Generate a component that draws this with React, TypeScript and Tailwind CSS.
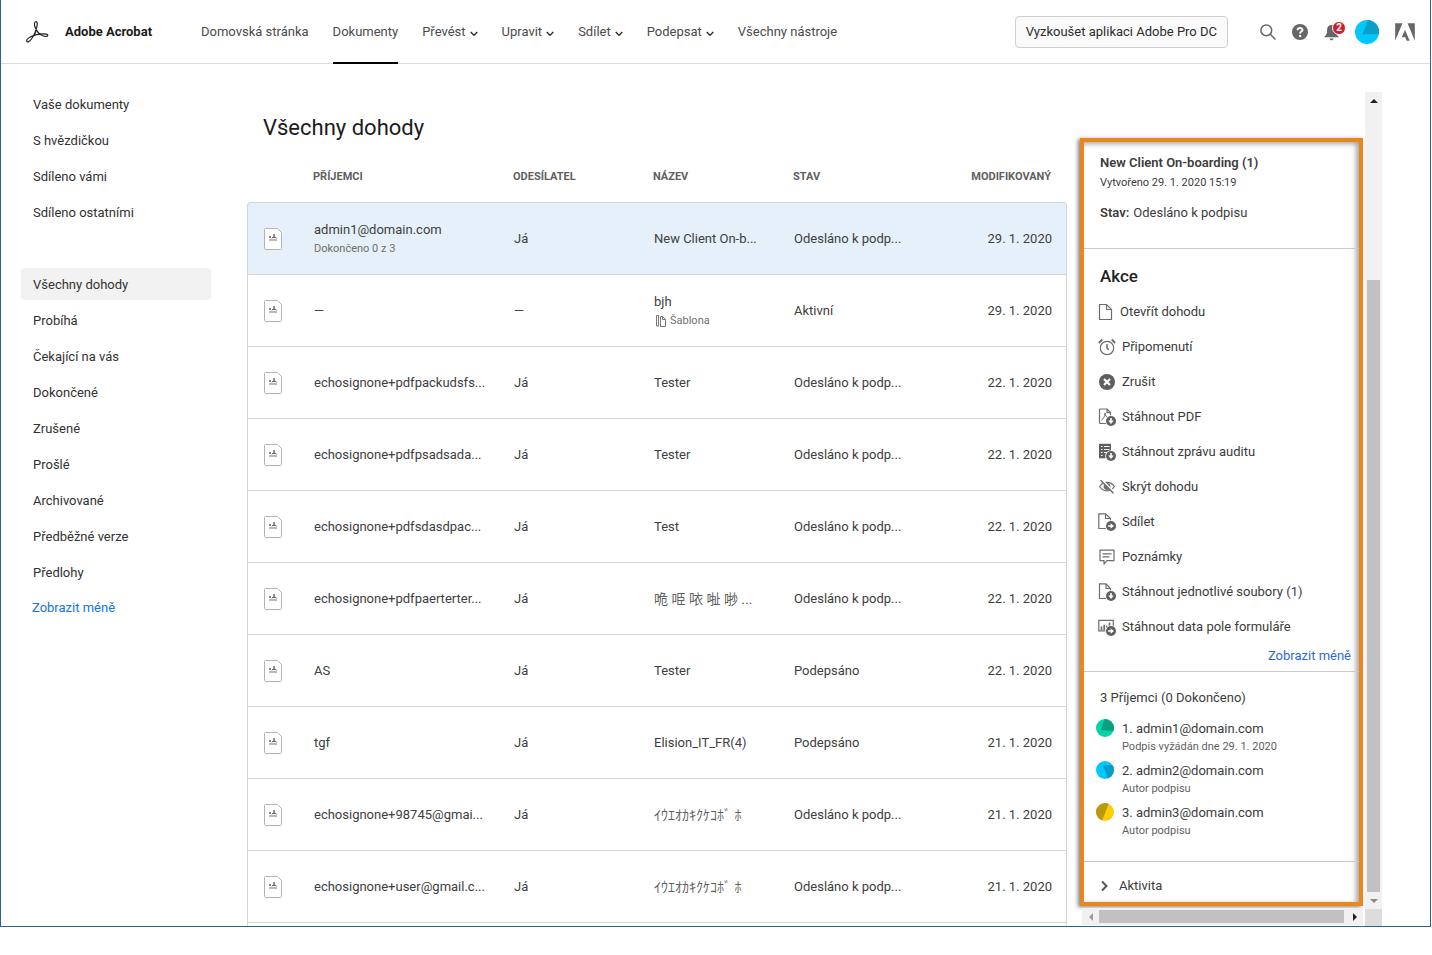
import { ReactNode } from "react";

type Agreement = {
  recipient: string;
  progress?: string;
  sender: string;
  title: string;
  eastAsian?: boolean;
  template?: boolean;
  status: string;
  modified: string;
};

type Recipient = {
  email: string;
  note: string;
  base: string;
  shade: string;
  wedge: string;
};

const navItems = [
  { label: "Domovská stránka" },
  { label: "Dokumenty", active: true },
  { label: "Převést", menu: true },
  { label: "Upravit", menu: true },
  { label: "Sdílet", menu: true },
  { label: "Podepsat", menu: true },
  { label: "Všechny nástroje" },
];

const documentLinks = [
  "Vaše dokumenty",
  "S hvězdičkou",
  "Sdíleno vámi",
  "Sdíleno ostatními",
];

const agreementLinks = [
  "Všechny dohody",
  "Probíhá",
  "Čekající na vás",
  "Dokončené",
  "Zrušené",
  "Prošlé",
  "Archivované",
  "Předběžné verze",
  "Předlohy",
];

const agreements: Agreement[] = [
  {
    recipient: "admin1@domain.com",
    progress: "Dokončeno 0 z 3",
    sender: "Já",
    title: "New Client On-b...",
    status: "Odesláno k podp...",
    modified: "29. 1. 2020",
  },
  {
    recipient: "—",
    sender: "—",
    title: "bjh",
    template: true,
    status: "Aktivní",
    modified: "29. 1. 2020",
  },
  {
    recipient: "echosignone+pdfpackudsfs...",
    sender: "Já",
    title: "Tester",
    status: "Odesláno k podp...",
    modified: "22. 1. 2020",
  },
  {
    recipient: "echosignone+pdfpsadsada...",
    sender: "Já",
    title: "Tester",
    status: "Odesláno k podp...",
    modified: "22. 1. 2020",
  },
  {
    recipient: "echosignone+pdfsdasdpac...",
    sender: "Já",
    title: "Test",
    status: "Odesláno k podp...",
    modified: "22. 1. 2020",
  },
  {
    recipient: "echosignone+pdfpaerterter...",
    sender: "Já",
    title: "𠱓 𠱸 𠲖 𠳏 𠳕 ...",
    eastAsian: true,
    status: "Odesláno k podp...",
    modified: "22. 1. 2020",
  },
  {
    recipient: "AS",
    sender: "Já",
    title: "Tester",
    status: "Podepsáno",
    modified: "22. 1. 2020",
  },
  {
    recipient: "tgf",
    sender: "Já",
    title: "Elision_IT_FR(4)",
    status: "Podepsáno",
    modified: "21. 1. 2020",
  },
  {
    recipient: "echosignone+98745@gmai...",
    sender: "Já",
    title: "ｲｳｴｵｶｷｸｹｺﾎﾞ ﾎ",
    eastAsian: true,
    status: "Odesláno k podp...",
    modified: "21. 1. 2020",
  },
  {
    recipient: "echosignone+user@gmail.c...",
    sender: "Já",
    title: "ｲｳｴｵｶｷｸｹｺﾎﾞ ﾎ",
    eastAsian: true,
    status: "Odesláno k podp...",
    modified: "21. 1. 2020",
  },
];

const recipients: Recipient[] = [
  {
    email: "1. admin1@domain.com",
    note: "Podpis vyžádán dne 29. 1. 2020",
    base: "#00d3a7",
    shade: "#0b9e80",
    wedge: "M5 11 9-1h10v13z",
  },
  {
    email: "2. admin2@domain.com",
    note: "Autor podpisu",
    base: "#00c8ff",
    shade: "#0a9cc6",
    wedge: "M7 4h11v14h-6z",
  },
  {
    email: "3. admin3@domain.com",
    note: "Autor podpisu",
    base: "#ffce00",
    shade: "#b89a10",
    wedge: "M13 0H0v18h6z",
  },
];

const Chevron = () => (
  <svg
    viewBox="0 0 8 6"
    className="mt-1 h-1.5 w-2 shrink-0"
    fill="none"
    stroke="#222"
    strokeWidth="1.3"
  >
    <path d="M.8 1 4 4.400 7.200 1" />
  </svg>
);

const AcrobatLogo = () => (
  <svg viewBox="0 0 24 24" className="h-6 w-6" fill="none" stroke="#222" strokeWidth="1.2">
    <path d="M11 1.600c-1.800 0-2 3.200-.7 6.200 1.400 3.500 4.300 6.700 7.500 8 2.200.9 4.700.9 5-.2.300-1.300-2.300-1.900-5.500-1.700-3.400.2-7.600 1-10.600 2.400-3 1.400-5.400 3.700-4.900 5 .4 1.200 2.700.5 4.700-2.300 2.200-3.100 4.400-7.800 5.200-11.300.8-3.300.9-6.100-.7-6.100z" />
    <path d="M11.800 9.500c-.8 2.600-1.700 4.800-3 7" strokeWidth=".8" />
  </svg>
);

const Badge = ({ arrow }: { arrow: "down" | "right" }) => (
  <g stroke="none">
    <circle cx="13" cy="13" r="5.800" fill="#fff" />
    <circle cx="13" cy="13" r="5" fill="#5f5f5f" />
    {arrow === "down" ? (
      <path d="M12.200 10h1.600v2.600h2L13 16l-2.800-3.400h2z" fill="#fff" />
    ) : (
      <path d="M10 12.200h2.600v-2L16 13l-3.400 2.800v-2H10z" fill="#fff" />
    )}
  </g>
);

const ActionIcon = ({ children }: { children: ReactNode }) => (
  <svg
    viewBox="0 0 18 18"
    className="h-[18px] w-[18px] shrink-0"
    fill="none"
    stroke="#6e6e6e"
    strokeWidth="1.2"
  >
    {children}
  </svg>
);

const actions: { label: string; icon: ReactNode }[] = [
  {
    label: "Připomenutí",
    icon: (
      <>
        <circle cx="9" cy="10" r="6.700" />
        <path d="M9 6v4.300l2 1.300" strokeWidth="1.500" />
        <path d="M.8 5 4.300 1.500M17.200 5l-3.500-3.500" strokeWidth="1.800" />
      </>
    ),
  },
  {
    label: "Zrušit",
    icon: (
      <>
        <circle cx="9" cy="9" r="8" fill="#5f5f5f" stroke="none" />
        <path d="m6 6 6 6m0-6-6 6" stroke="#fff" strokeWidth="2.200" />
      </>
    ),
  },
  {
    label: "Stáhnout PDF",
    icon: (
      <>
        <path d="M8 15.500H2.500a1 1 0 0 1-1-1V2a1 1 0 0 1 1-1h6.600L12.500 4.500V8M9 1v3.600h3.500" />
        <path d="M3.500 12c2-1 3.500-4 3.500-7 0 2.500 1.500 4.500 4 5" strokeWidth="1" />
        <Badge arrow="down" />
      </>
    ),
  },
  {
    label: "Stáhnout zprávu auditu",
    icon: (
      <>
        <path d="M1 .8h12v14.500H1z" fill="#5f5f5f" stroke="none" />
        <path
          d="M3 3.500h1.500M6 3.500h5.500M3 6.500h1.500M6 6.500h5.500M3 9.500h1.500M6 9.500h3M3 12.500h1.500"
          stroke="#fff"
        />
        <Badge arrow="down" />
      </>
    ),
  },
  {
    label: "Skrýt dohodu",
    icon: (
      <>
        <path d="M1.700 8.500C3.300 5.800 6 4.300 9 4.300s5.700 1.500 7.300 4.200c-1.600 2.700-4.300 4.300-7.300 4.300s-5.700-1.600-7.300-4.300z" />
        <circle cx="9" cy="8.500" r="2.800" fill="#6e6e6e" />
        <path d="m3.600 1.600 12.300 12.300" stroke="#fff" strokeWidth="1.500" />
        <path d="m2.500 2.200 13 13" strokeWidth="1.500" />
      </>
    ),
  },
  {
    label: "Sdílet",
    icon: (
      <>
        <path d="M8 15.500H.8V.8h6.700L12.500 5.500V8M7.500.8v4.700h5" />
        <Badge arrow="right" />
      </>
    ),
  },
  {
    label: "Poznámky",
    icon: (
      <>
        <path d="M2 2.200h14v10.400H9l-3 3.400v-3.400H2z" strokeLinejoin="round" />
        <path d="M4.500 5.800h9M4.500 8.800h7" />
      </>
    ),
  },
  {
    label: "Stáhnout jednotlivé soubory (1)",
    icon: (
      <>
        <path d="M8 15.500H1.500V.8h6.500L12.500 5.500V8M8 .8v4.700h4.500" />
        <Badge arrow="down" />
      </>
    ),
  },
  {
    label: "Stáhnout data pole formuláře",
    icon: (
      <>
        <path d="M.8 2.300h14.500v10.500H.8z" />
        <path d="M3.500 12V8.500M6.200 12V6.800M8.800 12V7.800M11.500 10V4.500" strokeWidth="1.700" />
        <Badge arrow="right" />
      </>
    ),
  },
];

const AgreementIcon = () => (
  <svg viewBox="0 0 18 22" className="h-[22px] w-[18px]" fill="#fff" stroke="#b4b4b4">
    <path d="M.5 1.500a1 1 0 0 1 1-1h12l4 4v16a1 1 0 0 1-1 1h-15a1 1 0 0 1-1-1z" />
    <path d="M5 12h8" stroke="#777" />
    <path
      d="m5.200 8 1.800 1.800m0-1.800-1.800 1.800M7.700 10.500c1.500-1 2.700-2.700 2.300-4.500M10 6c0 2 1 3.800 2.700 4.300M8.300 9.500h3.700"
      stroke="#666"
      fill="none"
    />
  </svg>
);

const TemplateIcon = () => (
  <svg viewBox="0 0 10 12" className="h-3 w-2.5" fill="none" stroke="#777">
    <path d="M.5.500v10.500h2V.5zM4.500 1.500v10h5V4.500L6.500 1.500zM6.500 1.500v3h3" />
  </svg>
);

const Header = () => (
  <header className="flex h-16 items-center border-b border-[#dcdcdc] pl-6 pr-[15px]">
    <a href="#" className="flex w-[176px] shrink-0 items-center gap-4">
      <AcrobatLogo />
      <span className="text-[13px] font-bold text-[#1b1b1b]">Adobe Acrobat</span>
    </a>
    <nav className="flex h-16 flex-1 gap-6">
      {navItems.map((item) => (
        <a
          key={item.label}
          href="#"
          className={`flex items-center gap-1 whitespace-nowrap border-b-2 pt-[3px] text-[13px] text-[#4b4b4b] ${
            item.active ? "border-b-black" : "border-b-transparent"
          }`}
        >
          {item.label}
          {item.menu && <Chevron />}
        </a>
      ))}
    </nav>
    <button className="h-8 whitespace-nowrap rounded border border-[#d0d0d0] bg-[#fafafa] px-2.5 text-[13px] text-[#2c2c2c]">
      Vyzkoušet aplikaci Adobe Pro DC
    </button>
    <div className="ml-8 flex items-center gap-4">
      <button aria-label="Hledat">
        <svg viewBox="0 0 16 16" className="h-4 w-4" fill="none" stroke="#666" strokeWidth="1.500">
          <circle cx="6.300" cy="6.300" r="5.400" />
          <path d="m10.300 10.300 5.200 5.200" />
        </svg>
      </button>
      <button aria-label="Nápověda">
        <svg viewBox="0 0 16 16" className="h-4 w-4" fill="none">
          <circle cx="8" cy="8" r="8" fill="#666" />
          <path
            d="M5.600 6.200c0-3 4.900-2.900 4.900-.3 0 1.700-2.400 1.700-2.400 3.600"
            stroke="#fff"
            strokeWidth="1.900"
          />
          <circle cx="8.100" cy="12" r="1.200" fill="#fff" />
        </svg>
      </button>
      <button aria-label="Oznámení" className="relative">
        <svg viewBox="0 0 16 18" className="h-[18px] w-4" fill="#666">
          <path d="M7.500 2c-3 0-4.400 2.300-4.400 5.200 0 3.800-1 4.800-2.600 6.300v.8h14v-.8C13 12 12 11 12 7.200 12 4.300 10.500 2 7.500 2zM5.600 15.500h3.800c0 1-.7 1.800-1.900 1.800s-1.900-.8-1.900-1.800z" />
        </svg>
        <span className="absolute -right-1.5 -top-0.5 flex h-3.5 w-3.5 items-center justify-center rounded-full border border-white bg-[#cf1b2b] text-[10px] font-bold text-white">
          2
        </span>
      </button>
      <button aria-label="Profil" className="-ml-px">
        <svg viewBox="0 0 24 24" className="h-6 w-6">
          <circle cx="12" cy="12" r="12" fill="#00c8ff" />
          <path d="M7.500 14.200 13 0a12 12 0 0 1 11 14.200z" fill="#0a9fc8" />
        </svg>
      </button>
      <a href="#" aria-label="Adobe">
        <svg viewBox="0 1 24 22" className="h-[18px] w-5" fill="#666">
          <path d="M13.966 22.624l-1.690-4.281H8.122l3.892-9.144 5.662 13.425zM8.884 1.376H0v21.248zm15.116 0h-8.884L24 22.624Z" />
        </svg>
      </a>
    </div>
  </header>
);

const Sidebar = () => (
  <aside className="w-[190px] shrink-0 pt-6 text-[13px] text-[#323232]">
    <ul className="flex flex-col gap-1">
      {documentLinks.map((label) => (
        <li key={label}>
          <a href="#" className="flex h-8 items-center px-3 pt-0.5">
            {label}
          </a>
        </li>
      ))}
    </ul>
    <ul className="mt-10 flex flex-col gap-1">
      {agreementLinks.map((label, index) => (
        <li key={label}>
          <a
            href="#"
            className={`flex h-8 items-center rounded px-3 pt-0.5 ${
              index === 0 ? "bg-[#f2f2f2]" : ""
            }`}
          >
            {label}
          </a>
        </li>
      ))}
      <li>
        <button className="flex h-8 items-center px-[11px] text-[#1473e6]">
          Zobrazit méně
        </button>
      </li>
    </ul>
  </aside>
);

const AgreementTable = () => (
  <main className="ml-9 min-w-0 flex-1">
    <h1 className="mt-12 px-4 text-[22px] leading-8 text-[#1b1b1b]">Všechny dohody</h1>
    <table className="mt-2 w-full table-fixed border-separate border-spacing-0 text-left text-[13px] text-[#404040]">
      <colgroup>
        <col className="w-[66px]" />
        <col className="w-[200px]" />
        <col className="w-[140px]" />
        <col className="w-[140px]" />
        <col />
        <col className="w-[130px]" />
      </colgroup>
      <thead>
        <tr className="h-[50px] text-[11px] text-[#5f5f5f]">
          <th />
          <th>PŘÍJEMCI</th>
          <th>ODESÍLATEL</th>
          <th>NÁZEV</th>
          <th>STAV</th>
          <th className="pr-4 text-right">MODIFIKOVANÝ</th>
        </tr>
      </thead>
      <tbody>
        {agreements.map((row, index) => {
          const first = index === 0;
          const cell = `border-b border-[#d5d5d5] ${first ? "border-t bg-[#e6f0fa]" : ""}`;
          return (
            <tr key={index} className={first ? "h-[73px]" : "h-[72px]"}>
              <td className={`border-l pl-4 ${first ? "rounded-tl" : ""} ${cell}`}>
                <AgreementIcon />
              </td>
              <td className={`whitespace-nowrap pl-px ${cell}`}>
                {row.recipient}
                {row.progress && (
                  <div className="mt-0.5 text-[11px] leading-4 text-[#6e6e6e]">
                    {row.progress}
                  </div>
                )}
              </td>
              <td className={`pl-px ${cell}`}>{row.sender}</td>
              <td
                className={`whitespace-nowrap pl-px ${
                  row.eastAsian ? "text-sm text-[#5f5f5f]" : ""
                } ${cell}`}
              >
                {row.title}
                {row.template && (
                  <div className="mt-0.5 flex items-center gap-1 pl-0.5 text-[11px] leading-4 text-[#6e6e6e]">
                    <TemplateIcon />
                    Šablona
                  </div>
                )}
              </td>
              <td className={`whitespace-nowrap pl-px ${cell}`}>{row.status}</td>
              <td className={`border-r pr-3.5 text-right ${first ? "rounded-tr" : ""} ${cell}`}>
                {row.modified}
              </td>
            </tr>
          );
        })}
      </tbody>
    </table>
    <div className="h-[3px] border-x border-[#d5d5d5]" />
  </main>
);

const DetailsPanel = () => (
  <section className="mt-[46px] border-4 border-[#e8871e] text-[13px] leading-5 text-[#3c3c3c] shadow-[-2px_1px_4px_rgba(0,0,0,0.5),inset_-3px_2px_5px_rgba(0,0,0,0.35)]">
    <div className="border-b border-[#cacaca] px-4 pb-[25px] pt-[11px]">
      <h2 className="font-semibold">New Client On-boarding (1)</h2>
      <p className="text-[11px] leading-5">Vytvořeno 29. 1. 2020 15:19</p>
      <p className="mt-2.5">
        <span className="mr-1 font-semibold">Stav:</span>
        Odesláno k podpisu
      </p>
    </div>
    <div className="border-b border-[#cacaca] pb-[5px] pt-[15px]">
      <h3 className="px-4 text-[17px] leading-6 font-medium text-[#222]">Akce</h3>
      <ul className="mt-1.5 px-[14px]">
        <li>
          <button className="flex h-[35px] items-center gap-1">
            <ActionIcon>
              <path d="M1.500 1.500h7L13.500 6.500v10h-12zM8.500 1.500v5h5" />
            </ActionIcon>
            Otevřít dohodu
          </button>
        </li>
        {actions.map((action) => (
          <li key={action.label}>
            <button className="flex h-[35px] items-center gap-1.5 whitespace-nowrap">
              <ActionIcon>{action.icon}</ActionIcon>
              {action.label}
            </button>
          </li>
        ))}
      </ul>
      <div className="mt-0.5 flex justify-end pr-2">
        <button className="text-[#3068d8]">Zobrazit méně</button>
      </div>
    </div>
    <div className="border-b border-[#cacaca] pb-[22px] pt-4">
      <p className="px-4">3 Příjemci (0 Dokončeno)</p>
      <ul className="mt-[11px] flex flex-col gap-1.5 px-3">
        {recipients.map((person) => (
          <li key={person.email} className="flex gap-2">
            <svg viewBox="0 0 18 18" className="h-[18px] w-[18px] shrink-0 rounded-full">
              <rect width="18" height="18" fill={person.base} />
              <path d={person.wedge} fill={person.shade} />
            </svg>
            <div className="whitespace-nowrap">
              {person.email}
              <div className="text-[11px] leading-4 text-[#5f5f5f]">{person.note}</div>
            </div>
          </li>
        ))}
      </ul>
    </div>
    <button className="flex w-full items-center gap-2.5 px-4 pb-1.5 pt-3.5">
      <svg viewBox="0 0 9 12" className="h-3 w-[9px]" fill="none" stroke="#555" strokeWidth="2">
        <path d="m2 1.500 4.500 4.500L2 10.500" />
      </svg>
      Aktivita
    </button>
  </section>
);

const HorizontalScrollbar = () => (
  <div className="ml-0.5 mt-0.5 flex h-[17px] items-center bg-[#f1f1f1]">
    <button aria-label="Doleva" className="flex w-[17px] justify-center">
      <svg viewBox="0 0 4 8" className="h-2 w-1" fill="#9a9a9a">
        <path d="M4 0v8L0 4z" />
      </svg>
    </button>
    <div className="h-[13px] flex-1 bg-[#c1c1c1]" />
    <button aria-label="Doprava" className="ml-0.5 flex w-[17px] justify-center">
      <svg viewBox="0 0 4 8" className="h-2 w-1" fill="#222">
        <path d="M0 0v8l4-4z" />
      </svg>
    </button>
  </div>
);

const VerticalScrollbar = () => (
  <div className="ml-0.5 flex w-[17px] flex-col">
    <div className="flex flex-1 flex-col items-center bg-[#f1f1f1]">
      <button aria-label="Nahoru" className="flex h-[17px] items-center">
        <svg viewBox="0 0 8 4" className="h-1 w-2" fill="#222">
          <path d="M0 4h8L4 0z" />
        </svg>
      </button>
      <div className="mt-[171px] w-[13px] flex-1 bg-[#c1c1c1]" />
      <button aria-label="Dolů" className="flex h-[17px] items-center">
        <svg viewBox="0 0 8 4" className="h-1 w-2" fill="#8a8a8a">
          <path d="M0 0h8L4 4z" />
        </svg>
      </button>
    </div>
    <div className="h-[17px] bg-[#dcdcdc]" />
  </div>
);

const App = () => {
  return (
    <div className="mr-px border-x border-b border-[#2a62a0] bg-white font-['Roboto','Noto_Sans_CJK_TC','Noto_Sans_CJK_JP',sans-serif]">
      <Header />
      <div className="flex pl-5 pr-12">
        <Sidebar />
        <AgreementTable />
        <div className="ml-[13px] mt-7 flex shrink-0">
          <div className="w-[283px]">
            <DetailsPanel />
            <HorizontalScrollbar />
          </div>
          <VerticalScrollbar />
        </div>
      </div>
    </div>
  );
};

export default App;
